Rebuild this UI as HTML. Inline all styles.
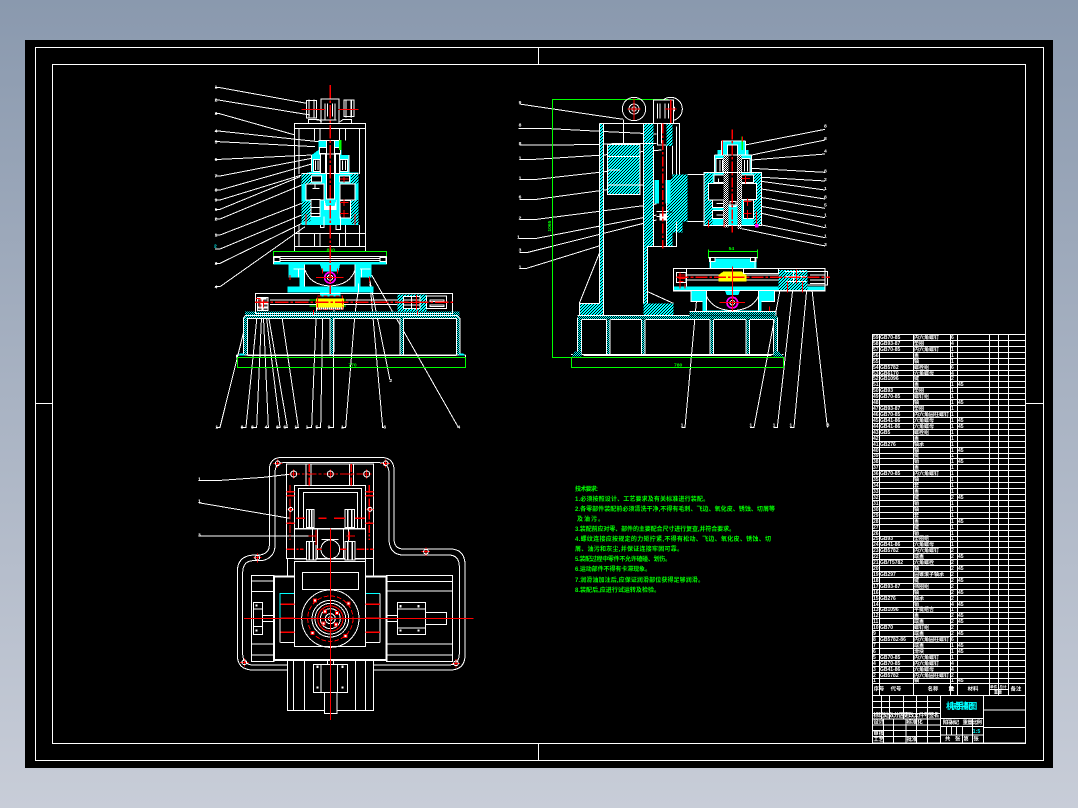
<!DOCTYPE html>
<html lang="zh"><head><meta charset="utf-8"><title>CAD</title>
<style>
html,body{margin:0;padding:0;width:1078px;height:808px;overflow:hidden;background:linear-gradient(#8a99ae,#c8cdd8)}
svg{position:absolute;left:0;top:0;display:block}
text{stroke:none;font-family:"Liberation Sans","Noto Sans CJK SC",sans-serif}
.t{fill:#fff;font-size:15px;font-weight:bold}
.g{fill:#0f0;font-size:15px;font-weight:bold}
.bom text{fill:#fff;font-size:5px;font-weight:bold}
.req text{fill:#0f0;font-size:6px;font-weight:bold}
</style></head><body>
<svg width="1078" height="808" viewBox="0 0 1078 808" shape-rendering="crispEdges">
<defs>
<pattern id="h" width="9" height="9" patternUnits="userSpaceOnUse"><rect width="9" height="9" fill="#0ff"/><rect x="6" y="0" width="3" height="3" fill="#000"/><rect x="3" y="3" width="3" height="3" fill="#000"/><rect x="0" y="6" width="3" height="3" fill="#000"/></pattern>
<pattern id="c" width="6" height="6" patternUnits="userSpaceOnUse"><rect width="6" height="6" fill="#000"/><rect width="3" height="3" fill="#0ff"/><rect x="3" y="3" width="3" height="3" fill="#0ff"/></pattern>
<pattern id="d" width="6" height="6" patternUnits="userSpaceOnUse"><rect width="6" height="6" fill="#fff"/><rect x="3" y="0" width="3" height="3" fill="#000"/><rect x="0" y="3" width="3" height="3" fill="#000"/></pattern>
</defs>
<rect x="25" y="40" width="1028" height="728" fill="#000"/>
<g fill="none" stroke="#fff">
<rect x="35.5" y="47.5" width="1008" height="713"/>
<rect x="52.5" y="64.5" width="973" height="679"/>
<path d="M538.5 47V64M538.5 744V760M35 403.5H52M1026 403.5H1043"/>
</g>

<!-- VIEW A -->
<g transform="translate(200,70) scale(.333333)" fill="none" stroke="#fff" stroke-width="3">
<path d="M45 52H55L320 100M45 90H55L330 135M45 130H55L285 195M45 183H55L355 215M45 215H55L345 230M45 268H60L335 255M45 318H60L335 265M45 360H60L335 282M45 390H60L305 315M45 418H60L300 320M45 447H60L305 345M45 495H60L305 400M45 537H60L305 435M45 580H60L310 458M45 650H60L315 470"/>
<path d="M48 1072H60L130 790M125 1072H138L172 730M155 1072H170L185 730M195 1072H205L190 730M230 1072H240L198 730M253 1072H262L205 735M285 1072H295L245 735M320 1072H335L350 700M348 1072H362L368 740M385 1072H400L402 720M425 1072H437L465 730L478 640M552 1072H548L510 640M570 930L505 610M775 1072L515 615"/>
<g class="t"><text x="44" y="56">1</text><text x="44" y="95">2</text><text x="44" y="135">3</text><text x="44" y="188">4</text><text x="44" y="220">5</text><text x="44" y="273">6</text><text x="44" y="323">7</text><text x="44" y="365">8</text><text x="44" y="395">9</text><text x="44" y="423">1</text><text x="44" y="452">2</text><text x="44" y="500">1</text><text x="42" y="533" style="fill:#0ff">2</text><text x="44" y="585">3</text><text x="44" y="655">4</text>
<text x="46" y="1076">1</text><text x="122" y="1076">8</text><text x="153" y="1076">8</text><text x="194" y="1076">4</text><text x="228" y="1076">8</text><text x="250" y="1076">6</text><text x="283" y="1076">1</text><text x="317" y="1076">1</text><text x="346" y="1076">5</text><text x="383" y="1076">9</text><text x="423" y="1076">1</text><text x="550" y="1076">6</text><text x="568" y="936">2</text><text x="772" y="1076">4</text></g>

<!-- motor -->
<rect x="363" y="87" width="54" height="73"/>
<path d="M375 100V150M405 100V150M383 100V140M397 100V140"/>
<rect x="320" y="92" width="30" height="52"/><rect x="432" y="90" width="30" height="50"/>
<path d="M327 88V146M342 88V146M438 88V142M454 88V142" stroke-width="4"/>
<path d="M325 160V148H355L365 155M455 160V148H430L420 155M350 150H410"/>
<path d="M305 118H375M415 118H475" stroke="#f00"/>
<!-- frame -->
<rect x="283" y="160" width="214" height="384"/>
<path d="M283 176H497M283 490H497M283 530H497M297 176V312M478 176V312M343 176V212M360 176V212M418 176V212M437 176V212M297 465V530M343 490V530M360 490V530M418 490V530M437 465V530M478 465V530"/>
<!-- body -->
<polygon points="355,212 425,212 425,255 447,255 447,308 476,308 476,465 305,465 305,312 335,305 335,255 355,240" fill="#0ff" stroke="none"/>
<rect x="305" y="310" width="30" height="32" fill="url(#h)" stroke="none"/><rect x="305" y="395" width="27" height="60" fill="url(#h)" stroke="none"/><rect x="453" y="310" width="23" height="30" fill="url(#h)" stroke="none"/><rect x="453" y="390" width="23" height="72" fill="url(#h)" stroke="none"/>
<g fill="#000">
<rect x="318" y="342" width="54" height="48"/><rect x="420" y="342" width="45" height="48"/>
<rect x="333" y="388" width="27" height="52"/><rect x="420" y="392" width="32" height="52"/>
<rect x="335" y="318" width="30" height="18"/><rect x="418" y="318" width="30" height="18"/>
<rect x="340" y="268" width="20" height="36"/><rect x="420" y="268" width="22" height="36"/>
<rect x="358" y="232" width="22" height="20"/><rect x="402" y="232" width="20" height="20"/>
<rect x="380" y="212" width="24" height="175"/>
<rect x="362" y="250" width="14" height="60"/><rect x="406" y="250" width="12" height="60"/>
</g>
<path d="M333 412H360M333 430H360M338 355H358M345 340V355M346 272V300M354 272V300M428 272V300M436 272V300M305 310H476M380 212V385M403 212V385M360 252H420M362 465V472H372V440M408 465V478H422V440M355 212H425M447 255V308M335 255V305" />
<path d="M372 385L378 408H404L410 385V420H372Z" fill="#fff" stroke="none"/>
<path d="M432 318V338M420 327H445M432 388V408M420 398H445M432 420V442M420 430H445M318 432V465M465 432V465" stroke="#f00"/>
<path d="M421 210V240" stroke="#0f0" stroke-width="8"/>
<!-- table -->
<rect x="220" y="544" width="340" height="38" stroke="#0f0"/>
<text class="g" x="380" y="544">860</text>
<polygon points="220,576 560,576 560,584 515,584 515,622 482,622 482,650 520,650 520,668 422,668 422,680 360,680 360,668 262,668 262,650 298,650 298,622 265,622 265,584 220,584" fill="#0ff" stroke="none"/>
<polygon points="313,584 360,584 368,605 415,605 420,584 465,584 465,650 313,650" fill="#000" stroke="none"/>
<path d="M220 560H560M222 563H240V574H222ZM540 563H558V574H540ZM240 566H540V571H240ZM220 560V582M560 560V582" />
<path d="M313 584V650M465 584V650M315 600Q330 645 390 648Q450 645 465 600M280 597H312M480 597H512M296 597V622M484 597V622M475 640V668"/>
<circle cx="390" cy="623" r="16" stroke="#f0f" stroke-width="5"/><circle cx="390" cy="623" r="8"/>
<path d="M348 622H430M270 615V630M508 620V635M368 595V610M412 595V610" stroke="#f00"/>
<!-- slide -->
<rect x="135" y="725" width="643" height="20" fill="url(#c)" stroke="none"/>
<rect x="166" y="670" width="592" height="60"/>
<path d="M210 690H592M210 704H592"/>
<rect x="348" y="685" width="84" height="27" fill="#ff0" stroke="none"/>
<rect x="352" y="678" width="76" height="40" stroke="#f00" stroke-dasharray="12 6"/>
<path d="M328 690H348M328 708H348M432 690H438M432 708H438" stroke="#0f0"/>
<path d="M350 716H430" stroke="#fff" stroke-width="6" stroke-dasharray="4 2"/>
<rect x="172" y="682" width="32" height="40" fill="#444"/>
<path d="M175 686H200M178 700H204M172 712H204M188 682V722" stroke-width="6"/>
<path d="M168 685H180V712M190 690V712" stroke="#f00"/>
<rect x="592" y="673" width="88" height="52" fill="url(#h)" stroke="none"/>
<rect x="610" y="680" width="50" height="35" fill="#000"/>
<path d="M610 690H660M610 705H660M635 680V715"/>
<rect x="680" y="678" width="60" height="38"/><rect x="690" y="690" width="42" height="5"/><rect x="690" y="705" width="42" height="4"/>
<path d="M650 675V720M625 697H672M340 720V738M652 722V738" stroke="#f00"/>
<!-- base -->
<path d="M137 855V740H774V855M395 745V855M605 745V855" stroke="url(#c)" stroke-width="10"/>
<path d="M142 855V746H390V855M400 855V746H600V855M610 855V746H770V855M130 855V745L136 737H772L780 745V855M110 855H797M110 855V862M797 855V862M142 857H770"/>
<polygon points="120,850 130,850 135,857 115,857" fill="#0ff" stroke="none"/><polygon points="780,850 790,850 795,857 775,857" fill="#0ff" stroke="none"/>
<rect x="112" y="862" width="685" height="30" stroke="#0f0"/>
<text class="g" x="445" y="890">770</text>
<path d="M391 45V672" stroke="#f00" stroke-width="4" stroke-dasharray="40 6 8 6"/>
<path d="M165 697H762" stroke="#f00" stroke-width="4" stroke-dasharray="40 6 8 6"/>
</g>

<!-- VIEW B -->
<g transform="translate(500,80) scale(.333333)" fill="none" stroke="#fff" stroke-width="3">
<path d="M58 72L370 118M55 145H130L320 155L470 162M58 195H180L470 190M58 238H105L310 225L485 210M58 298H110L360 270M58 358H110L460 310M58 418H110L470 372M55 475H110L470 405M58 518H80L470 420M58 565H80L300 497"/>
<path d="M975 148L735 195M975 180L755 225M975 222L755 240M975 277L755 265M975 303L755 290M975 330L755 300M975 357L740 320M975 385L770 350M975 413L760 375M975 443L785 400M975 473L785 435M975 498L720 445"/>
<path d="M545 1042H555L595 600M750 1042H762L840 630M820 1042H832L878 630M870 1042H882L920 630M982 1042L935 620"/>
<g class="t"><text x="56" y="72">9</text><text x="56" y="140">8</text><text x="56" y="195">8</text><text x="56" y="238">1</text><text x="56" y="298">1</text><text x="56" y="355">6</text><text x="56" y="418">2</text><text x="51" y="475">1</text><text x="56" y="515">3</text><text x="56" y="565">1</text>
<text x="972" y="143">8</text><text x="972" y="180">8</text><text x="972" y="218">4</text><text x="972" y="277">8</text><text x="972" y="303">2</text><text x="972" y="330">1</text><text x="972" y="355">8</text><text x="972" y="380">5</text><text x="972" y="410">1</text><text x="972" y="443">1</text><text x="972" y="473">1</text><text x="972" y="498">3</text>
<text x="542" y="1040">1</text><text x="748" y="1040">1</text><text x="818" y="1040">1</text><text x="868" y="1040">1</text><text x="980" y="1040">8</text></g>
<!-- green dims -->
<path d="M505 58H157V832H505" stroke="#0f0"/>
<rect x="215" y="832" width="635" height="30" stroke="#0f0"/>
<text class="g" transform="translate(153,455) rotate(-90)" x="0" y="0">1065</text>
<text class="g" x="522" y="859">780</text>
<path d="M625 508V535M772 508V535M625 515H772" stroke="#0f0"/>
<text class="g" x="686" y="510">54</text>
<!-- wheels -->
<circle cx="402" cy="87" r="35"/><circle cx="512" cy="87" r="35"/><circle cx="402" cy="87" r="15"/><circle cx="402" cy="87" r="7"/><circle cx="512" cy="87" r="12"/>
<rect x="460" y="60" width="60" height="70" fill="#000"/>
<path d="M472 70V115M480 70V115M495 70V115M505 70V115"/>
<path d="M382 87H422M402 55V120M495 87H530M512 60V130" stroke="#f00" stroke-width="4"/>
<!-- column -->
<rect x="298" y="130" width="13" height="540" fill="url(#h)" stroke="none"/>
<polygon points="430,130 460,130 460,500 443,500 443,670 520,670 520,706 430,706" fill="url(#h)" stroke="none"/>
<polygon points="238,670 311,670 311,706 238,706" fill="url(#h)" stroke="none"/>
<polygon points="500,130 518,130 518,198 500,198" fill="url(#h)" stroke="none"/>
<polygon points="500,398 518,398 518,500 500,500" fill="url(#h)" stroke="none"/>
<polygon points="518,283 563,283 563,425 548,425 548,458 518,458 518,395 500,395 500,305 518,295" fill="url(#h)" stroke="none"/>
<rect x="322" y="193" width="98" height="150" fill="url(#h)"/>
<rect x="463" y="300" width="14" height="70" fill="#0ff" stroke="none"/><rect x="497" y="300" width="14" height="70" fill="#0ff" stroke="none"/>
<path d="M298 130H538V283M298 130V670M311 130V706M430 130V670M443 500V670M460 198V500M500 198V500M518 198V283M530 140V283M530 425V500H443M563 283H612M563 425H612M370 120V190M335 190H460M298 520L238 670V706M443 635L520 670M238 670H298M238 706H520M472 130V195H500M484 130V190M470 410H505M470 395H505M322 270H360M322 230H420M322 315H420"/>
<rect x="478" y="400" width="20" height="22" fill="#fff" stroke="none"/>
<path d="M488 130V505" stroke="#f00" stroke-width="4" stroke-dasharray="30 6 8 6"/>
<!-- spindle head -->
<rect x="612" y="278" width="173" height="158" fill="#0ff" stroke="none"/>
<rect x="612" y="280" width="26" height="155" fill="url(#h)" stroke="none"/><rect x="760" y="280" width="25" height="155" fill="url(#h)" stroke="none"/>
<polygon points="665,183 737,183 737,210 745,210 745,225 755,225 755,280 643,280 643,225 652,225 652,210 665,210" fill="#0ff" stroke="none"/>
<g fill="#000">
<rect x="625" y="310" width="48" height="50"/><rect x="725" y="310" width="45" height="48"/>
<rect x="638" y="360" width="32" height="22"/><rect x="638" y="392" width="32" height="24"/>
<rect x="648" y="235" width="22" height="42"/><rect x="725" y="235" width="25" height="42"/>
<rect x="642" y="285" width="30" height="22"/><rect x="725" y="285" width="35" height="22"/>
<rect x="682" y="195" width="30" height="180"/><rect x="730" y="360" width="30" height="55"/>
</g>
<rect x="670" y="225" width="15" height="218" fill="url(#d)" stroke="none"/><rect x="712" y="225" width="13" height="222" fill="url(#d)" stroke="none"/>
<rect x="612" y="278" width="173" height="158"/>
<path d="M660 240V275M668 240V275M733 240V275M742 240V275M643 225H755V280M643 225V280M665 183H737M665 183V225M737 183V225M655 296V307M650 370H670M650 405H670M690 365H708V380H690Z"/>
<path d="M697 148V458" stroke="#f00" stroke-width="4" stroke-dasharray="30 5 8 5"/>
<path d="M727 170V210" stroke="#0f0" stroke-width="4"/>
<path d="M727 170V185M667 180V225M725 295H750M737 285V310M730 365H755M742 355V378M730 400H755M742 390V415M625 420V442M672 420V442M770 395V440" stroke="#f00"/>
<rect x="765" y="432" width="10" height="10" fill="#f0f" stroke="none"/>
<!-- table B -->
<polygon points="628,535 770,535 770,565 737,565 730,580 665,580 660,565 628,565" fill="#0ff" stroke="none"/>
<rect x="628" y="533" width="17" height="12" fill="#000"/><rect x="752" y="533" width="16" height="12" fill="#000"/>
<path d="M625 533H772M632 533V565M765 533V565M660 565L665 580M737 565L730 580"/>
<rect x="520" y="565" width="455" height="68" fill="#000"/>
<rect x="520" y="620" width="455" height="12" fill="#0ff" stroke="none"/>
<polygon points="573,632 823,632 823,665 785,665 785,695 608,695 608,665 573,665" fill="#0ff" stroke="none"/>
<polygon points="620,632 775,632 775,692 620,692" fill="#000" stroke="none"/>
<polygon points="675,632 720,632 715,645 680,645" fill="#0ff" stroke="none"/>
<path d="M620 650Q640 690 697 692Q755 690 775 650M620 632V692M775 632V692M573 632V665H608M823 632V665H785"/>
<polygon points="655,585 670,575 725,575 740,585 740,605 655,605" fill="#ff0" stroke="none"/>
<rect x="835" y="570" width="87" height="60" fill="url(#h)" stroke="none"/>
<path d="M560 585H655M740 585H835M560 600H655M740 600H835M520 565H975V632H520ZM730 565V580H835V565M560 565V620M635 585H655M635 600H655M740 585H750" />
<path d="M855 575H920M855 590H920M860 605H920M880 575V610"/>
<path d="M922 575H983V615H922M930 585H975M930 600H975M930 610H975"/>
<rect x="530" y="578" width="28" height="30"/>
<path d="M535 585H555M535 595H555M535 605H550M540 578V625M555 610V625" stroke="#f00"/>
<path d="M530 592H990" stroke="#f00" stroke-width="4" stroke-dasharray="36 6 8 6"/>
<circle cx="697" cy="668" r="16" stroke="#f0f" stroke-width="5"/><circle cx="697" cy="668" r="7"/>
<path d="M658 667H735M697 560V695M890 568V610M862 605V638M907 605V638M808 680V695" stroke="#f00" stroke-width="3"/>
<!-- base B -->
<rect x="568" y="695" width="260" height="12" fill="url(#c)" stroke="none"/>
<path d="M238 825V712H828V825M325 718V825M430 718V825M635 718V825M743 718V825" stroke="url(#c)" stroke-width="9"/>
<path d="M232 712V822M244 718V822M244 718H320M332 718H425M437 718H630M642 718H738M750 718H820V822M832 712V822M232 706H568M568 695H828V706M320 718V825M330 718V825M425 718V825M435 718V825M630 718V825M640 718V825M738 718V825M748 718V825M213 823H850M250 826H815"/>
<polygon points="225,815 245,815 245,830 214,830" fill="url(#c)" stroke="none"/><polygon points="820,815 838,815 850,830 820,830" fill="url(#c)" stroke="none"/>
</g>

<!-- VIEW C -->
<g transform="translate(190,450) scale(.333333)" fill="none" stroke="#fff" stroke-width="3">
<path d="M292 660H190Q142 660 142 615V365Q142 318 190 315H210Q238 310 238 285V60Q238 22 278 22H570Q612 22 612 60V265Q612 297 640 297H780Q825 297 825 345V615Q825 660 780 660H552"/>
<path d="M292 645H190Q158 645 158 610V370Q158 332 190 332H215Q255 325 255 285V70Q255 38 280 38H565Q597 38 597 70V265Q597 315 640 315H775Q808 315 808 350V610Q808 645 775 645H552"/>
<path d="M25 92H78L220 82L305 72M25 158L300 205M25 258H355"/>
<text class="t" x="24" y="92">1</text><text class="t" x="24" y="158">1</text><text class="t" x="24" y="260">3</text>
<!-- top plate -->
<rect x="290" y="42" width="260" height="283"/>
<path d="M348 42V106M363 42V106M478 42V106M490 42V106"/>
<rect x="313" y="106" width="214" height="130"/><rect x="326" y="116" width="188" height="120"/><rect x="340" y="127" width="162" height="109"/>
<path d="M300 72H540" stroke="#f00" stroke-dasharray="30 6 8 6"/>
<path d="M358 42V106M484 42V106M300 105V270M538 105V270M290 125H313M290 137H313M527 125H550M527 137H550M290 220H313M527 220H550M290 298H340M500 298H550" stroke="#f00" stroke-width="4" stroke-dasharray="24 5 6 5"/>
<rect x="313" y="237" width="214" height="90"/>
<circle cx="421" cy="298" r="28"/>
<path d="M367 238V326M382 238V326M460 238V326M475 238V326M395 268H445"/>
<g fill="#000">
<rect x="350" y="178" width="22" height="55"/><rect x="465" y="178" width="28" height="55"/>
<rect x="350" y="275" width="28" height="55"/><rect x="465" y="275" width="30" height="55"/>
</g>
<path d="M358 178V233M365 178V233M473 178V233M485 178V233M358 275V330M370 275V330M473 275V330M487 275V330" stroke-width="5"/>
<path d="M318 205H345M385 205H410M432 205H465M495 205H525M355 258H380M470 258H495M378 240V285M478 245V270M380 298H395M450 298H470M500 298H520" stroke="#f00" stroke-width="4"/>
<!-- holes -->
<g stroke="#f00"><path d="M263 28V52M250 40H276M587 28V52M575 40H600M202 310V338M190 323H214M708 292V318M695 305H720M163 625V650M150 637H176M798 627V652M786 640H810M311 58V86M297 72H325M421 58V86M407 72H435M530 58V86M516 72H544M302 168V188M292 178H312M540 168V188M530 178H550"/></g>
<circle cx="263" cy="40" r="7"/><circle cx="587" cy="40" r="7"/><circle cx="202" cy="323" r="7"/><circle cx="708" cy="305" r="7"/><circle cx="163" cy="637" r="7"/><circle cx="798" cy="640" r="7"/><circle cx="311" cy="72" r="9"/><circle cx="421" cy="72" r="9"/><circle cx="530" cy="72" r="9"/><circle cx="302" cy="178" r="6"/><circle cx="540" cy="178" r="6"/>
<!-- center -->
<path d="M292 325V380M527 380V325M550 325V380"/>
<rect x="252" y="380" width="337" height="250" stroke-width="6"/>
<rect x="185" y="377" width="67" height="257"/><rect x="589" y="377" width="198" height="257"/>
<path d="M185 393H250M185 424H250M185 582H250M185 615H250M589 395H787M589 423H787M589 582H787M589 615H787"/>
<rect x="190" y="457" width="28" height="97"/><path d="M190 477H218M190 530H218M218 497H250M218 515H250"/>
<rect x="622" y="457" width="85" height="97"/><path d="M622 477H707M622 534H707M590 497H622M590 515H622"/><rect x="707" y="487" width="63" height="37"/>
<path d="M270 505V430H313M527 430H570" stroke="#0ff"/>
<path d="M272 578H313M527 578H570M270 505V578M570 430V578"/>
<rect x="313" y="335" width="214" height="255" fill="#000"/>
<rect x="337" y="367" width="168" height="51"/>
<circle cx="421" cy="506" r="86"/>
<circle cx="421" cy="506" r="68" stroke="#f00" stroke-dasharray="14 6"/>
<circle cx="421" cy="506" r="55"/><circle cx="421" cy="506" r="46"/><circle cx="421" cy="506" r="38" stroke="#f00"/><circle cx="421" cy="506" r="30"/><circle cx="421" cy="506" r="15"/><circle cx="421" cy="506" r="6"/>
<path d="M272 463H313M272 505H313M272 547H313M527 463H570M527 505H570M527 547H570" stroke="#f00" stroke-width="5"/>
<path d="M162 505H850" stroke="#f00" stroke-width="3"/>
<path d="M421 235V810" stroke="#f00" stroke-width="3"/>
<g fill="#fff" stroke="#f00"><rect x="370" y="447" width="9" height="9"/><rect x="471" y="456" width="9" height="9"/><rect x="363" y="545" width="9" height="9"/><rect x="462" y="553" width="9" height="9"/><rect x="400" y="480" width="9" height="9"/><rect x="436" y="484" width="9" height="9"/><rect x="396" y="516" width="9" height="9"/><rect x="433" y="519" width="9" height="9"/></g>
<!-- bottom -->
<rect x="292" y="630" width="258" height="152"/>
<path d="M310 630V782M343 630V782M497 630V782M527 630V782M412 630V643M430 630V643"/>
<rect x="370" y="643" width="102" height="85" fill="#000"/><path d="M393 643V728M443 643V728"/>
<rect x="403" y="728" width="38" height="63" fill="#000"/>
<path d="M421 630V808" stroke="#f00" stroke-width="3"/>
<g fill="#fff" stroke="none"><rect x="379" y="647" width="7" height="7"/><rect x="379" y="709" width="7" height="7"/><rect x="454" y="647" width="7" height="7"/><rect x="454" y="709" width="7" height="7"/><rect x="196" y="463" width="7" height="7"/><rect x="196" y="538" width="7" height="7"/><rect x="628" y="465" width="7" height="7"/><rect x="682" y="465" width="7" height="7"/><rect x="628" y="538" width="7" height="7"/><rect x="682" y="538" width="7" height="7"/></g>
</g>

<!-- REQUIREMENTS -->
<g class="req">
<text x="575" y="491" textLength="23">技术要求:</text>
<text x="575" y="501" textLength="134">1.必须按照设计、工艺要求及有关标准进行装配。</text>
<text x="575" y="511" textLength="200">2.各零部件装配前必须清洗干净,不得有毛刺、飞边、氧化皮、锈蚀、切屑等</text>
<text x="577" y="521" textLength="27">及油污。</text>
<text x="575" y="531" textLength="160">3.装配前应对零、部件的主要配合尺寸进行复查,并符合要求。</text>
<text x="575" y="541" textLength="196">4.螺纹连接应按规定的力矩拧紧,不得有松动、飞边、氧化皮、锈蚀、切</text>
<text x="575" y="551" textLength="108">屑、油污和灰尘,并保证连接牢固可靠。</text>
<text x="575" y="561" textLength="96">5.装配过程中零件不允许磕碰、划伤。</text>
<text x="575" y="571" textLength="76">6.运动部件不得有卡滞现象。</text>
<text x="575" y="582" textLength="129">7.润滑油加注后,应保证润滑部位获得足够润滑。</text>
<text x="575" y="592" textLength="85">8.装配后,应进行试运转及检验。</text>
</g>

<!-- BOM GRID -->
<path fill="none" stroke="#fff" d="M872 334.5H1026M872 340.5H1026M872 346.5H1026M872 352.5H1026M872 358.5H1026M872 364.5H1026M872 370.5H1026M872 375.5H1026M872 381.5H1026M872 387.5H1026M872 393.5H1026M872 399.5H1026M872 405.5H1026M872 411.5H1026M872 417.5H1026M872 423.5H1026M872 429.5H1026M872 435.5H1026M872 441.5H1026M872 447.5H1026M872 453.5H1026M872 458.5H1026M872 464.5H1026M872 470.5H1026M872 476.5H1026M872 482.5H1026M872 488.5H1026M872 494.5H1026M872 500.5H1026M872 506.5H1026M872 512.5H1026M872 518.5H1026M872 524.5H1026M872 530.5H1026M872 536.5H1026M872 541.5H1026M872 547.5H1026M872 553.5H1026M872 559.5H1026M872 565.5H1026M872 571.5H1026M872 577.5H1026M872 583.5H1026M872 589.5H1026M872 595.5H1026M872 601.5H1026M872 607.5H1026M872 612.5H1026M872 618.5H1026M872 624.5H1026M872 630.5H1026M872 636.5H1026M872 642.5H1026M872 648.5H1026M872 654.5H1026M872 660.5H1026M872 666.5H1026M872 672.5H1026M872 678.5H1026M872 683.5H1026M872 695.5H1026M872.5 334V744M879.5 334V695M913.5 334V695M950.5 334V695M957.5 334V695M989.5 334V695M998.5 334V683M1008.5 334V695"/>

<g class="bom">
<text y="339"><tspan x="873">59</tspan><tspan x="880">GB70-85</tspan><tspan x="914">内六角螺钉</tspan><tspan x="951">6</tspan></text>
<text y="345"><tspan x="873">58</tspan><tspan x="880">GB93-87</tspan><tspan x="914">垫圈</tspan><tspan x="951">4</tspan></text>
<text y="351"><tspan x="873">57</tspan><tspan x="880">GB70-85</tspan><tspan x="914">内六角螺钉</tspan><tspan x="951">1</tspan></text>
<text y="357"><tspan x="873">56</tspan><tspan x="914">盖</tspan><tspan x="951">1</tspan></text>
<text y="363"><tspan x="873">55</tspan><tspan x="914">轴</tspan><tspan x="951">1</tspan></text>
<text y="369"><tspan x="873">54</tspan><tspan x="880">GB5782</tspan><tspan x="914">螺栓组</tspan><tspan x="951">6</tspan></text>
<text y="375"><tspan x="873">53</tspan><tspan x="880">GB6170</tspan><tspan x="914">六角螺母</tspan><tspan x="951">4</tspan></text>
<text y="380"><tspan x="873">52</tspan><tspan x="880">GB1096</tspan><tspan x="914">键</tspan><tspan x="951">2</tspan></text>
<text y="386"><tspan x="873">51</tspan><tspan x="914">盖</tspan><tspan x="951">1</tspan><tspan x="958">45</tspan></text>
<text y="392"><tspan x="873">50</tspan><tspan x="880">GB93</tspan><tspan x="914">垫圈</tspan><tspan x="951">1</tspan></text>
<text y="398"><tspan x="873">49</tspan><tspan x="880">GB70-85</tspan><tspan x="914">螺钉组</tspan><tspan x="951">1</tspan></text>
<text y="404"><tspan x="873">48</tspan><tspan x="914">轴</tspan><tspan x="951">1</tspan><tspan x="958">45</tspan></text>
<text y="410"><tspan x="873">47</tspan><tspan x="880">GB93-87</tspan><tspan x="914">垫圈</tspan><tspan x="951">1</tspan></text>
<text y="416"><tspan x="873">46</tspan><tspan x="880">GB70-85</tspan><tspan x="914">内六角圆柱螺钉</tspan><tspan x="951">1</tspan></text>
<text y="422"><tspan x="873">45</tspan><tspan x="880">GB41-86</tspan><tspan x="914">六角螺母</tspan><tspan x="951">1</tspan><tspan x="958">45</tspan></text>
<text y="428"><tspan x="873">44</tspan><tspan x="880">GB41-86</tspan><tspan x="914">六角螺母</tspan><tspan x="951">1</tspan><tspan x="958">45</tspan></text>
<text y="434"><tspan x="873">43</tspan><tspan x="880">GB5</tspan><tspan x="914">螺栓组</tspan><tspan x="951">1</tspan></text>
<text y="440"><tspan x="873">42</tspan><tspan x="914">盖</tspan><tspan x="951">1</tspan></text>
<text y="446"><tspan x="873">41</tspan><tspan x="880">GB276</tspan><tspan x="914">轴承</tspan><tspan x="951">1</tspan></text>
<text y="452"><tspan x="873">40</tspan><tspan x="914">轴</tspan><tspan x="951">1</tspan><tspan x="958">45</tspan></text>
<text y="457"><tspan x="873">39</tspan><tspan x="914">键</tspan><tspan x="951">1</tspan></text>
<text y="463"><tspan x="873">38</tspan><tspan x="914">销</tspan><tspan x="951">1</tspan><tspan x="958">45</tspan></text>
<text y="469"><tspan x="873">37</tspan><tspan x="914">盖</tspan><tspan x="951">1</tspan></text>
<text y="475"><tspan x="873">36</tspan><tspan x="880">GB70-85</tspan><tspan x="914">内六角螺钉</tspan><tspan x="951">1</tspan></text>
<text y="481"><tspan x="873">35</tspan><tspan x="914">轴</tspan><tspan x="951">1</tspan></text>
<text y="487"><tspan x="873">34</tspan><tspan x="914">套</tspan><tspan x="951">1</tspan></text>
<text y="493"><tspan x="873">33</tspan><tspan x="914">盖</tspan><tspan x="951">1</tspan></text>
<text y="499"><tspan x="873">32</tspan><tspan x="914">键</tspan><tspan x="951">2</tspan><tspan x="958">45</tspan></text>
<text y="505"><tspan x="873">31</tspan><tspan x="914">销</tspan><tspan x="951">1</tspan></text>
<text y="511"><tspan x="873">30</tspan><tspan x="914">轴</tspan><tspan x="951">1</tspan></text>
<text y="517"><tspan x="873">29</tspan><tspan x="914">套</tspan><tspan x="951">1</tspan></text>
<text y="523"><tspan x="873">28</tspan><tspan x="914">盖</tspan><tspan x="951">1</tspan><tspan x="958">45</tspan></text>
<text y="529"><tspan x="873">27</tspan><tspan x="914">键</tspan><tspan x="951">1</tspan></text>
<text y="535"><tspan x="873">26</tspan><tspan x="914">销</tspan><tspan x="951">1</tspan></text>
<text y="540"><tspan x="873">25</tspan><tspan x="880">GB93</tspan><tspan x="914">垫圈组</tspan><tspan x="951">1</tspan></text>
<text y="546"><tspan x="873">24</tspan><tspan x="880">GB41-86</tspan><tspan x="914">六角螺母</tspan><tspan x="951">1</tspan></text>
<text y="552"><tspan x="873">23</tspan><tspan x="880">GB5782</tspan><tspan x="914">内六角螺钉</tspan><tspan x="951">2</tspan></text>
<text y="558"><tspan x="873">22</tspan><tspan x="914">端盖</tspan><tspan x="951">2</tspan><tspan x="958">45</tspan></text>
<text y="564"><tspan x="873">21</tspan><tspan x="880">GB/T5782</tspan><tspan x="914">六角螺栓</tspan><tspan x="951">2</tspan></text>
<text y="570"><tspan x="873">20</tspan><tspan x="914">轴</tspan><tspan x="951">2</tspan><tspan x="958">45</tspan></text>
<text y="576"><tspan x="873">19</tspan><tspan x="880">GB297</tspan><tspan x="914">圆锥滚子轴承</tspan><tspan x="951">2</tspan></text>
<text y="582"><tspan x="873">18</tspan><tspan x="914">键</tspan><tspan x="951">2</tspan><tspan x="958">45</tspan></text>
<text y="588"><tspan x="873">17</tspan><tspan x="880">GB93-87</tspan><tspan x="914">挡圈组</tspan><tspan x="951">2</tspan></text>
<text y="594"><tspan x="873">16</tspan><tspan x="914">轴</tspan><tspan x="951">2</tspan><tspan x="958">45</tspan></text>
<text y="600"><tspan x="873">15</tspan><tspan x="880">GB276</tspan><tspan x="914">轴承</tspan><tspan x="951">2</tspan></text>
<text y="606"><tspan x="873">14</tspan><tspan x="914">销</tspan><tspan x="951">4</tspan><tspan x="958">45</tspan></text>
<text y="611"><tspan x="873">13</tspan><tspan x="880">GB1096</tspan><tspan x="914">平键组合</tspan><tspan x="951">1</tspan></text>
<text y="617"><tspan x="873">12</tspan><tspan x="914">盖</tspan><tspan x="951">2</tspan><tspan x="958">45</tspan></text>
<text y="623"><tspan x="873">11</tspan><tspan x="914">端盖</tspan><tspan x="951">2</tspan><tspan x="958">45</tspan></text>
<text y="629"><tspan x="873">10</tspan><tspan x="880">GB70</tspan><tspan x="914">螺钉组</tspan><tspan x="951">2</tspan></text>
<text y="635"><tspan x="873">9</tspan><tspan x="914">端盖</tspan><tspan x="951">2</tspan><tspan x="958">45</tspan></text>
<text y="641"><tspan x="873">8</tspan><tspan x="880">GB5782-86</tspan><tspan x="914">内六角圆柱螺钉</tspan><tspan x="951">6</tspan></text>
<text y="647"><tspan x="873">7</tspan><tspan x="914">端盖</tspan><tspan x="951">1</tspan><tspan x="958">45</tspan></text>
<text y="653"><tspan x="873">6</tspan><tspan x="914">滑块</tspan><tspan x="951">1</tspan><tspan x="958">45</tspan></text>
<text y="659"><tspan x="873">5</tspan><tspan x="880">GB70-85</tspan><tspan x="914">内六角螺钉</tspan><tspan x="951">1</tspan></text>
<text y="665"><tspan x="873">4</tspan><tspan x="880">GB70-85</tspan><tspan x="914">内六角螺钉</tspan><tspan x="951">4</tspan></text>
<text y="671"><tspan x="873">3</tspan><tspan x="880">GB41-86</tspan><tspan x="914">六角螺母</tspan><tspan x="951">4</tspan></text>
<text y="677"><tspan x="873">2</tspan><tspan x="880">GB5782</tspan><tspan x="914">内六角圆柱螺钉</tspan><tspan x="951">2</tspan></text>
<text y="682"><tspan x="873">1</tspan><tspan x="914">轴</tspan><tspan x="951">1</tspan><tspan x="958">45</tspan></text>
</g>

<!-- TITLE BLOCK -->
<g transform="translate(860,540) scale(.333333)" fill="none" stroke="#fff" stroke-width="3">
<path d="M37 485H242M37 503H242M37 520H242M37 537H242M37 555H242M37 572H242M37 590H242M37 609H496M65 465V537M88 465V537M130 465V537M170 465V537M203 465V537M70 537V609M100 537V609M138 537V609M170 537V609M203 537V609M242 465V609M370 465V609M370 510H496M370 562H496M242 535H370M242 560H370M242 585H370M260 560V585M275 560V585M290 560V585M307 560V609M337 535V609M388 448H445M415 430V465"/>
<g style="font-weight:bold">
<text fill="#fff" style="font-size:16px" x="41" y="452">序号</text><text fill="#fff" style="font-size:16px" x="92" y="452">代号</text><text fill="#fff" style="font-size:16px" x="203" y="452">名称</text><text fill="#fff" style="font-size:16px" x="265" y="452" textLength="14">数量</text><text fill="#fff" style="font-size:16px" x="323" y="452">材料</text><text fill="#fff" style="font-size:11px" x="390" y="444">单件</text><text fill="#fff" style="font-size:11px" x="418" y="444">总计</text><text fill="#fff" style="font-size:12px" x="402" y="460">重量</text><text fill="#fff" style="font-size:16px" x="452" y="452">备注</text>
<text fill="#0ff" style="font-size:26px" x="258" y="507" textLength="94">机械手装配图</text>
<text fill="#fff" style="font-size:17px" x="40" y="531" textLength="198">标记处数分区更改文件号签名</text>
<text fill="#fff" style="font-size:16px" x="40" y="551">设计</text><text fill="#fff" style="font-size:16px" x="140" y="551">标准化</text>
<text fill="#fff" style="font-size:16px" x="40" y="585">审核</text><text fill="#fff" style="font-size:16px" x="40" y="603">工艺</text><text fill="#fff" style="font-size:16px" x="140" y="603">批准</text>
<text fill="#fff" style="font-size:16px" x="248" y="552" textLength="50">阶段标记</text><text fill="#fff" style="font-size:16px" x="308" y="552" textLength="58">重量比例</text>
<text fill="#0ff" style="font-size:16px" x="338" y="579">1:5</text>
<text fill="#fff" style="font-size:16px" x="255" y="602">共</text><text fill="#fff" style="font-size:16px" x="285" y="602">张</text><text fill="#fff" style="font-size:16px" x="310" y="602">第</text><text fill="#fff" style="font-size:16px" x="340" y="602">张</text>
</g>
</g>
</svg>
</body></html>
